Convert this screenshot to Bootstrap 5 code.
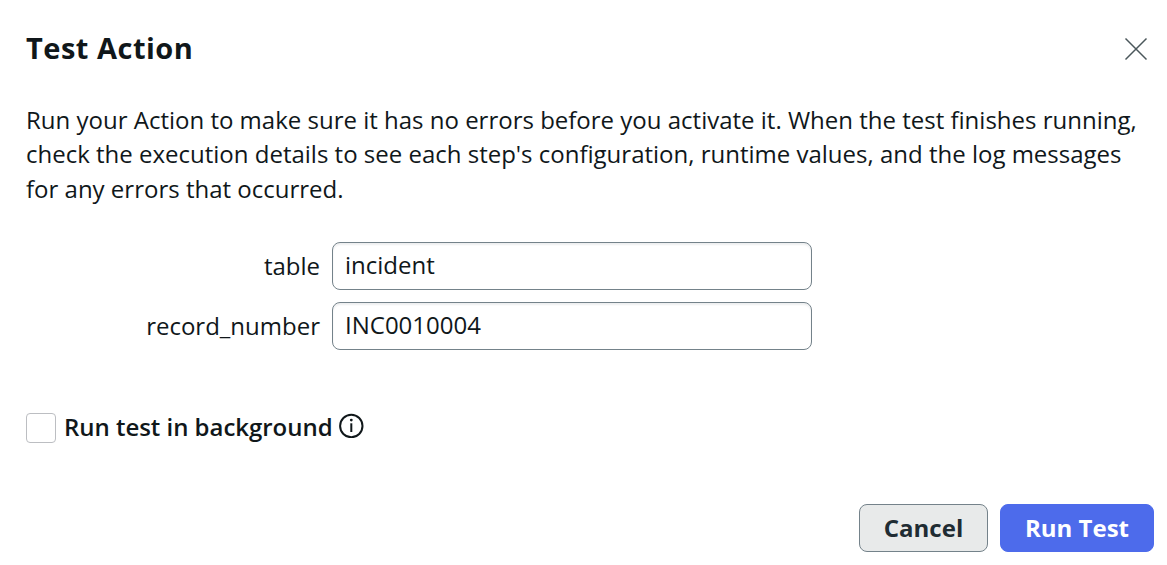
<!DOCTYPE html>
<html lang="en">
<head>
<meta charset="utf-8">
<meta name="viewport" content="width=device-width, initial-scale=1">
<title>Test Action</title>
<link href="https://cdn.jsdelivr.net/npm/bootstrap@5.3.0/dist/css/bootstrap.min.css" rel="stylesheet">
<style>
body{font-family:"Open Sans",sans-serif;font-size:24px;color:#10171a;background:#fff;overflow:hidden}
.dialog{height:565px;padding:26px 13px 13px 26px}
.dialog h1{font-size:29px;letter-spacing:.5px;font-weight:700;line-height:44px}
.close-btn{width:24px;height:24px;margin:11px 6px 0 0}
.intro{line-height:34.4px;margin:33px 0 0}
.fields{margin-top:35.3px;gap:12px}
.field-label{width:294px;line-height:48px;margin-right:12px}
.form-control.field{width:480px;height:48px;border:1px solid #74828a;border-radius:8px;padding:0 12px 2px;font-size:24px;color:#10171a;box-shadow:inset 0 2px 2px #eeeff0}
.background-run{margin-top:63px;height:30px}
.background-run label{line-height:30px;padding-bottom:2px;letter-spacing:-.03px}
.form-check-input.box{width:30px;height:30px;border:1px solid #bcbec2;border-radius:4px;margin:0 8px 0 0}
.info-icon{margin:0 0 4px 6.5px}
.actions .btn{height:48px;border-radius:8px;font-size:24px;font-weight:700;padding:0;line-height:46px}
.btn-cancel{width:129px;background:#e8eaea;border:1px solid #74828a;color:#1f2c33}
.btn-run{width:154px;background:#4d6beb;border:1px solid #4d6beb;color:#fff}
</style>
</head>
<body>
<main class="dialog d-flex flex-column">
<header class="d-flex justify-content-between">
<h1 class="m-0">Test Action</h1>
<button class="close-btn btn border-0 p-0 d-flex" aria-label="Close"><svg width="24" height="24" viewBox="0 0 24 24" fill="none" stroke="#4b575b" stroke-width="1.5"><path d="M1.5 1.5l21 21M22.5 1.5l-21 21"/></svg></button>
</header>
<p class="intro text-nowrap">Run your Action to make sure it has no errors before you activate it. When the test finishes running,<br>check the execution details to see each step's configuration, runtime values, and the log messages<br>for any errors that occurred.</p>
<form class="fields d-flex flex-column">
<div class="d-flex"><label class="field-label text-end" for="table">table</label><input id="table" class="form-control field" value="incident"></div>
<div class="d-flex"><label class="field-label text-end" for="record">record_number</label><input id="record" class="form-control field" value="INC0010004"></div>
</form>
<div class="background-run d-flex align-items-center">
<input id="bg" type="checkbox" class="form-check-input box"><label for="bg" class="fw-semibold">Run test in background</label>
<svg class="info-icon" width="25" height="25" viewBox="0 0 25 25" fill="none" stroke="#10171a" stroke-width="2"><circle cx="12.3" cy="13" r="11.2"/><path d="M12.3 10.3v8.7"/><circle cx="12.3" cy="7.1" r="1.4" fill="#10171a" stroke="none"/></svg>
</div>
<footer class="actions d-flex justify-content-end mt-auto">
<button class="btn btn-cancel me-2">Cancel</button><button class="btn btn-run ms-1">Run Test</button>
</footer>
</main>
<script src="https://cdn.jsdelivr.net/npm/bootstrap@5.3.0/dist/js/bootstrap.bundle.min.js"></script>
</body>
</html>
